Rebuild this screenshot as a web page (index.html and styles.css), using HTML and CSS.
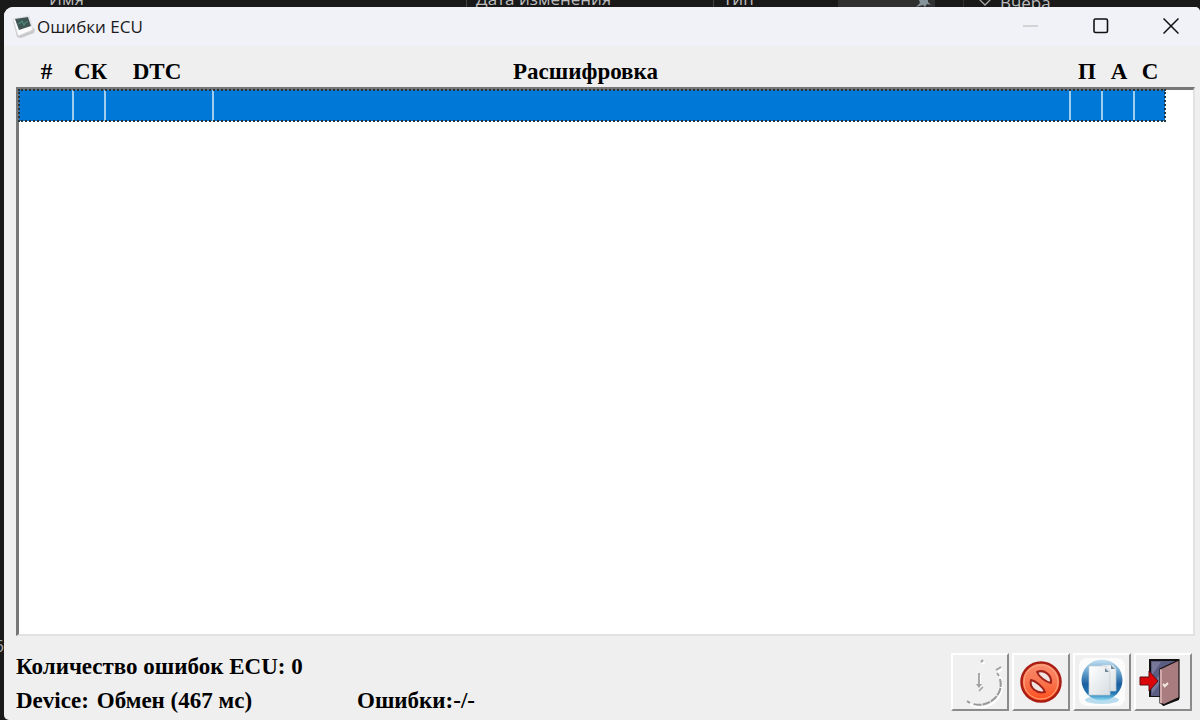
FILE: index.html
```html
<!DOCTYPE html>
<html lang="ru">
<head>
<meta charset="utf-8">
<title>Ошибки ECU</title>
<link rel="stylesheet" href="styles.css">
</head>
<body>
<div class="desktop">
  <div class="explorer">
    <span class="col col-name">Имя</span>
    <span class="col col-date">Дата изменения</span>
    <span class="col col-type">Тип</span>
    <span class="tab"><svg width="16" height="8" viewBox="0 0 16 8"><path d="M4 0h9v2l3 3-4-1-2 3-2-2-7 2 4-4z" fill="#87939a"/></svg></span>
    <span class="group"><svg width="14" height="8" viewBox="0 0 14 8"><path d="M1 0l6 6 6-6" fill="none" stroke="#aaa" stroke-width="1.3"/></svg><span class="group-name">Вчера</span></span>
  </div>
  <div class="side">6</div>
  <main class="window">
    <header class="titlebar">
      <svg class="app-icon" width="24" height="24" viewBox="0 0 24 24">
        <path d="M2 6l4 16 4 1 13-5 1-4z" fill="#c9c9cb"/>
        <path d="M2 4l16-3 4 14-15 6z" fill="#fbfbfb" stroke="#d2d2d4" stroke-width=".7"/>
        <path d="M4 4l13-2 3 9-12 4z" fill="#405554"/>
        <path d="M7 9l2-1 2-2 2 4 2-3 2 0" fill="none" stroke="#4b8c78" stroke-width="1.2"/>
      </svg>
      <h1 class="title">Ошибки ECU</h1>
      <div class="win-btns">
        <button class="win-btn" type="button" aria-label="Свернуть" disabled><svg width="16" height="16" viewBox="0 0 16 16"><path d="M0 8h15" stroke="#c8c8cb" stroke-width="1.3"/></svg></button>
        <button class="win-btn" type="button" aria-label="Развернуть"><svg width="16" height="16" viewBox="0 0 16 16"><rect x="1" y="1" width="13.5" height="13.5" rx="1.5" fill="none" stroke="#111" stroke-width="1.6"/></svg></button>
        <button class="win-btn" type="button" aria-label="Закрыть"><svg width="16" height="16" viewBox="0 0 16 16"><path d="M.5.5l15 15M15.500.5l-15 15" stroke="#111" stroke-width="1.5"/></svg></button>
      </div>
    </header>
    <section class="errors">
      <div class="frame"></div>
      <table class="grid">
        <colgroup><col class="w-num"><col class="w-flag"><col class="w-dtc"><col><col class="w-flag"><col class="w-flag"><col class="w-last"></colgroup>
        <thead><tr><th>#</th><th class="sk">СК</th><th class="dtc">DTC</th><th class="text">Расшифровка</th><th>П</th><th>А</th><th>С</th></tr></thead>
        <tbody><tr class="selected"><td></td><td></td><td></td><td></td><td></td><td></td><td></td></tr></tbody>
      </table>
    </section>
    <footer class="footer">
      <div class="status">
        <p class="line">Количество ошибок ECU: 0</p>
        <p class="line"><span class="device"><span>Device:</span><span>Обмен (467 мс)</span></span><span>Ошибки:-/-</span></p>
      </div>
      <div class="tools">
        <button class="tool" type="button" aria-label="Таймер" disabled>
          <svg width="54" height="54" viewBox="0 0 54 54" fill="none">
            <path d="M29 9l3-2M45 17l4-3M46 21l3 4M27 20v12M49 30c0 12-8 20-18 22-6 1-10 0-14-3" stroke="#fff" stroke-width="2"/>
            <path d="M28 7l2-2M43 15l5-3M44 18l2 3M26 18v12" stroke="#a0a0a0" stroke-width="1.8"/>
            <path d="M23 29h6l-3 4z" fill="#a0a0a0"/><path d="M26 36l4-4" stroke="#a0a0a0" stroke-width="1.6"/>
            <path d="M47 24c2 8 0 14-5 19-6 6-13 8-22 6M17 48l-3-2" stroke="#999" stroke-width="2" stroke-dasharray="8 1"/>
          </svg>
        </button>
        <button class="tool" type="button" aria-label="Стереть ошибки">
          <svg width="54" height="54" viewBox="0 0 54 54">
            <defs><linearGradient id="red" x1="0" y1="0" x2="0" y2="1"><stop offset="0" stop-color="#f98e70"/><stop offset=".5" stop-color="#f97550"/><stop offset="1" stop-color="#ff4c18"/></linearGradient></defs>
            <circle cx="27" cy="27" r="19.500" fill="url(#red)" stroke="#a91d13" stroke-width="2.500"/>
            <circle cx="27" cy="27" r="17" fill="none" stroke="#ffab82" stroke-width="1"/>
            <path d="M23 17c7-3 15 3 14 11-5-1-12-6-14-11z" fill="#efe4e1" stroke="#9f2119" stroke-width="2" stroke-linejoin="round"/>
            <path d="M17 25c-2 8 6 14 14 12-2-5-9-11-14-12z" fill="#efe4e1" stroke="#9f2119" stroke-width="2" stroke-linejoin="round"/>
          </svg>
        </button>
        <button class="tool" type="button" aria-label="Копировать">
          <svg width="54" height="54" viewBox="0 0 54 54">
            <defs>
              <linearGradient id="blue" x1="0" y1="0" x2="0" y2="1"><stop offset="0" stop-color="#c8e2f3"/><stop offset=".3" stop-color="#6aa5d0"/><stop offset=".6" stop-color="#1c5f9f"/><stop offset=".82" stop-color="#2274b0"/><stop offset="1" stop-color="#8fdcf6"/></linearGradient>
              <linearGradient id="paper" x1="0" y1="0" x2="1" y2="1"><stop offset="0" stop-color="#fff"/><stop offset="1" stop-color="#d6dde2"/></linearGradient>
            </defs>
            <rect x="4" y="3" width="46" height="48" rx="8" fill="#fcfcfc"/>
            <ellipse cx="27" cy="45" rx="17" ry="4" fill="#b9ddef"/>
            <circle cx="27" cy="25" r="20.500" fill="url(#blue)"/>
            <path d="M27 10h11l3 4v22H27z" fill="url(#paper)" stroke="#b9cbd6" stroke-width=".7"/>
            <path d="M14 11h17l4 5v24H14z" fill="url(#paper)" stroke="#c1cdd4" stroke-width=".7"/>
            <path d="M30 13v4h4zM36 10v4h4z" fill="#718b9b"/>
          </svg>
        </button>
        <button class="tool" type="button" aria-label="Выход">
          <svg width="54" height="54" viewBox="0 0 54 54">
            <path d="M13 4h30v38H13z" fill="#111"/>
            <path d="M15 6h26v35H15z" fill="#5a5c82"/><path d="M16 7h9L16 20zM16 30l9-12v9l-9 12z" fill="#777899"/>
            <path d="M24 14L43 5v38l-15 7-4-2z" fill="#a97d80" stroke="#171011" stroke-width="1.2"/>
            <path d="M24 14l2 1v34l-2-1z" fill="#d2aaaa"/><path d="M25 48l3 1 15-7v3l-16 6z" fill="#111"/>
            <path d="M28 32l4-4M27 29l2 2" stroke="#f4e9df" stroke-width="2"/>
            <path d="M4 22h9v-6l9 10-9 10v-6H4z" fill="#db0509" stroke="#5e0b0e" stroke-width="1"/>
          </svg>
        </button>
      </div>
    </footer>
  </main>
</div>
</body>
</html>
```
FILE: styles.css
```css
* { box-sizing: border-box; }
body { margin: 0; background: #191919; font-family: "Liberation Serif", "Times New Roman", serif; color: #000; }
.desktop { display: grid; grid-template: 7px 1fr / 4px 1fr; height: 100vh; overflow: hidden; }

.explorer { grid-column: 1 / -1; display: flex; align-items: flex-end; overflow: hidden; color: #bdbdbd; font: 17px/24px "Open Sans", "Noto Sans", sans-serif; }
.col { height: 24px; margin-bottom: -4px; white-space: nowrap; }
.col-name { width: 466px; padding-left: 49px; }
.col-date { width: 247px; padding-left: 9px; border-left: 1px solid #444; }
.col-type { width: 125px; padding-left: 9px; border-left: 1px solid #444; }
.tab { display: flex; justify-content: flex-end; width: 97px; height: 7px; padding-right: 4px; background: #303030; }
.group { display: flex; align-items: flex-end; height: 7px; margin-left: 28px; padding-left: 14px; border-left: 1px solid #333; }
.group-name { height: 24px; margin: 0 0 -8px 8px; }
.side { align-self: end; height: 84px; overflow: hidden; color: #aaa; font: 17px/20px "Open Sans", sans-serif; direction: rtl; }

.window { display: flex; flex-direction: column; min-width: 0; overflow: hidden; background: #efefef; border-radius: 9px 5px 0 5px; }
.titlebar { display: flex; align-items: center; height: 39px; padding-left: 7px; background: #f1f2f8; }
.title { flex: 1; margin: 0 0 0 2px; font: 17px/24px "Open Sans", "Noto Sans", sans-serif; color: #1b1b1b; }
.win-btns { display: flex; gap: 12px; }
.win-btn { display: grid; place-items: center; width: 58px; height: 39px; padding: 0 0 2px; border: 0; background: none; }

.errors { flex: 1; display: grid; grid-template-rows: 41px 1fr; margin: 0 5px 0 12px; }
.frame { grid-area: 2 / 1; border: 3px solid; border-color: #777 #e2e2e2 #e2e2e2 #777; border-right-width: 2px; border-bottom-width: 2px; background: #fff; }
.grid { grid-area: 1 / 1 / 3 / 2; align-self: start; margin: 0 30px 0 3px; table-layout: fixed; border-collapse: separate; border-spacing: 0; width: calc(100% - 33px); }
.w-num { width: 55px; }
.w-flag { width: 32px; }
.w-last { width: 30px; }
.w-dtc { width: 108px; }
.grid th { height: 44px; padding: 8px 0 0; font-size: 23px; line-height: 24px; white-space: nowrap; }
.grid .dtc { padding-right: 6px; }
.grid .text { padding-right: 114px; }
.grid td { height: 31px; padding: 0; background: #0078d7; border-right: 2px solid #9fcdef; }
.grid td:last-child { border-right: 0; }
.selected { outline: 2px dotted #26343c; outline-offset: -1px; }

.footer { display: flex; justify-content: space-between; padding: 14px 8px 2px 12px; }
.line { display: flex; margin: 0; font-size: 23px; font-weight: bold; line-height: 34px; white-space: nowrap; }
.device { display: flex; gap: 8px; width: 341px; }
.tools { display: flex; gap: 3px; padding-top: 3px; }
.tool { width: 58px; height: 58px; padding: 0; overflow: hidden; border: 2px solid; border-color: #fff #8b8b8b #8b8b8b #fff; background: #f0f0f0; }
.tool svg { display: block; }
```
